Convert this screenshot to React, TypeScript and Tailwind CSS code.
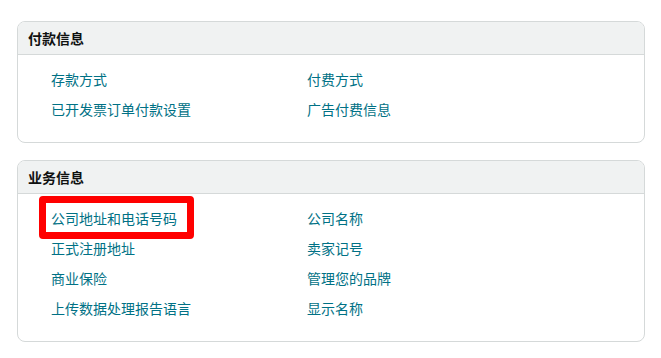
import React from "react";

type Section = {
  title: string;
  rows: [string, string][];
};

const sections: Section[] = [
  {
    title: "付款信息",
    rows: [
      ["存款方式", "付费方式"],
      ["已开发票订单付款设置", "广告付费信息"],
    ],
  },
  {
    title: "业务信息",
    rows: [
      ["公司地址和电话号码", "公司名称"],
      ["正式注册地址", "卖家记号"],
      ["商业保险", "管理您的品牌"],
      ["上传数据处理报告语言", "显示名称"],
    ],
  },
];

const highlighted = "公司地址和电话号码";

function Card({ section }: { section: Section }) {
  return (
    <div className="rounded-[8px] border border-[#d5d9d9] bg-white overflow-hidden">
      <div className="h-[33px] bg-[#f0f2f2] border-b border-[#d5d9d9] pl-[10px] flex items-center">
        <h3 className="text-[14px] font-bold text-[#0f1111] leading-none">{section.title}</h3>
      </div>
      <div className="pl-[33px] pt-[9px] pb-[18px] grid grid-cols-[256px_1fr]">
        {section.rows.map(([left, right]) => (
          <React.Fragment key={left}>
            <div className="h-[30px] flex items-center">
              <span className="relative text-[14px] text-[#007185] leading-none">
                {left}
                {left === highlighted && (
                  <span className="absolute left-[-12px] top-[-15px] w-[155px] h-[43px] border-[7px] border-[#ff0000] rounded-[4px]" />
                )}
              </span>
            </div>
            <div className="h-[30px] flex items-center">
              <span className="text-[14px] text-[#007185] leading-none">{right}</span>
            </div>
          </React.Fragment>
        ))}
      </div>
    </div>
  );
}

export default function App() {
  return (
    <div
      className="w-[661px] h-[358px] bg-white pt-[21px] pl-[17px] pr-[16px] flex flex-col gap-[17px]"
      style={{ fontFamily: '"Noto Sans CJK SC", "Noto Sans", sans-serif' }}
    >
      {sections.map((s) => (
        <Card key={s.title} section={s} />
      ))}
    </div>
  );
}
